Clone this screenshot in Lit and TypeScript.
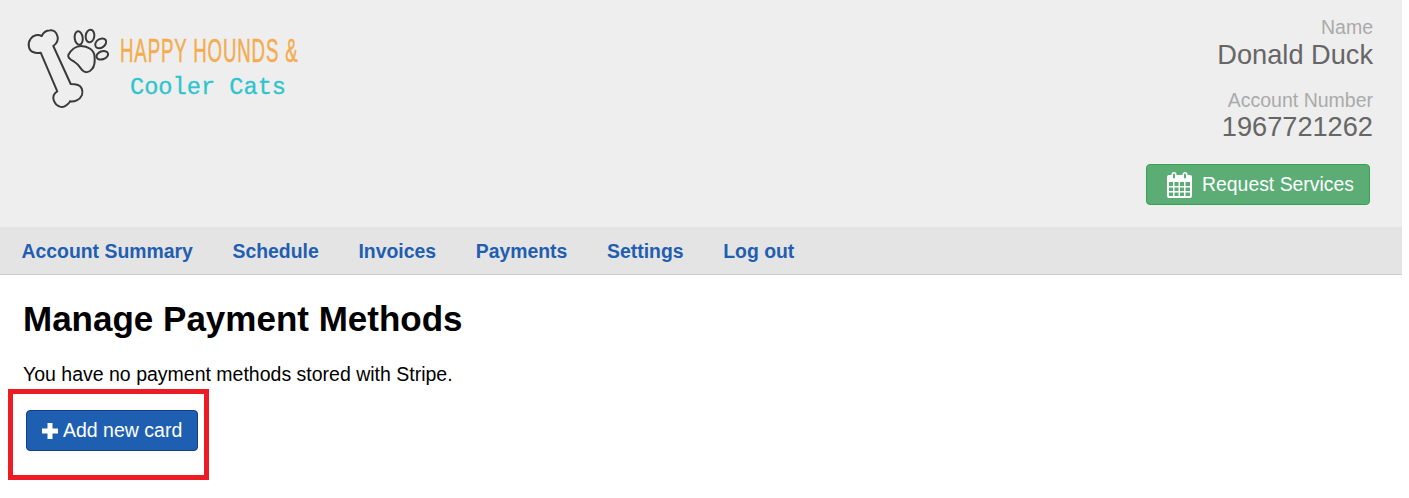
import { LitElement, html, css } from 'lit';
import { customElement } from 'lit/decorators.js';

@customElement('app-root')
export class AppRoot extends LitElement {
    static override styles = css`
    :host {
      display: block;
      position: relative;
      box-sizing: border-box;
      min-height: 498px;
      padding-right: 7px;
      background: #fff;
      color: #000;
      font-family: "Liberation Sans", Arial, sans-serif;
      font-size: 19.5px;
    }

    .top {
      height: 227px;
      box-sizing: border-box;
      background: #eee;
      display: flex;
      justify-content: space-between;
      padding: 14px 29px 0 24px;
    }
    .logo { display: block; width: 380px; height: 100px; }
    .logo-a { font-family: "Liberation Sans Narrow", "Liberation Sans", sans-serif; font-size: 33px; letter-spacing: 1.5px; fill: #f4ac4f; stroke: #f4ac4f; stroke-width: 0.5px; }
    .logo-b { font-family: "Liberation Mono", monospace; font-size: 24px; fill: #2cc5cd; stroke: #2cc5cd; stroke-width: 0.3px; }

    .account { display: flex; flex-direction: column; align-items: flex-end; }
    .label { color: #aaa; font-size: 19.5px; line-height: 26px; }
    .value { color: #666; font-size: 27.2px; line-height: 29px; }
    .value + .label { margin: 18px 0 -1px; }

    .request {
      display: flex; align-items: center; gap: 10px;
      box-sizing: border-box;
      height: 41px;
      margin: 23px 3px 0 0;
      padding: 0 15px 0 20px;
      font-size: 19.4px;
      color: #fff;
      background: #5bad75;
      border: 1px solid #36a350;
      border-radius: 4px;
    }

    nav {
      height: 48px;
      box-sizing: border-box;
      display: flex; align-items: center; gap: 39.7px;
      padding: 2px 21.5px 0;
      background: #e4e4e4;
      border-bottom: 1px solid #ccc;
      font-size: 19.4px;
      font-weight: 700;
      color: #1f5eb0;
    }

    main { padding: 0 24px; }
    h1 { margin: 0; padding-top: 23px; margin-left: -1px; font-size: 35px; line-height: 41px; font-weight: 700; }
    p { margin: 21px 0 0 -1px; line-height: 28px; }

    .add {
      display: flex; align-items: center; gap: 5px;
      box-sizing: border-box;
      width: 172px; height: 41px;
      margin: 22px 0 0 2px;
      padding-left: 15px;
      color: #fff;
      background: #1f5fb1;
      border: 1px solid #124080;
      border-radius: 4px;
    }

    .mark {
      position: absolute;
      left: 8px; top: 389px;
      width: 201px; height: 91px;
      box-sizing: border-box;
      border: 5px solid #ed1c24;
      pointer-events: none;
    }
  `;

    override render() {
        return html`
      <header class="top">
        <svg class="logo" viewBox="0 0 380 100" fill="none">
          <g stroke="#3a3a3a" stroke-width="2" stroke-linejoin="round">
            <path d="M17.700 22C14 20 9 21 6.500 25C3 30 5 37 9 38C12 39.500 15 39 16.700 38.700L33.300 77.300C30 79 28 83 30 87C32 92 38 95 42 91.500C44 90 46 88 46 87.300C50 88 56 86 58 81C59.500 76 57 72 54 71C51 70 48 70 46.700 70L29.300 32C32 30 34.500 27 33.700 23C33 18 29 15.500 26 16.300C22 16.500 19 19 17.700 22Z"/>
            <ellipse cx="54.700" cy="24" rx="4" ry="6.700" transform="rotate(-8 54.700 24)"/>
            <ellipse cx="66" cy="22" rx="4.300" ry="6.300" transform="rotate(8 66 22)"/>
            <ellipse cx="76.700" cy="29.300" rx="6" ry="4.300" transform="rotate(-35 76.700 29.300)"/>
            <ellipse cx="78.300" cy="41.300" rx="6" ry="4" transform="rotate(-20 78.300 41.300)"/>
            <path d="M44.300 41C47 36 52 32 57 32C64 32 70 36 70.500 42C71 47 71 52 68 55C65 59 61 59 58 56C55 52 54 50 50 47.500C47 46 43.500 44 44.300 41Z"/>
          </g>
          <text class="logo-a" transform="translate(96 48) scale(0.566 1)">HAPPY HOUNDS &amp;</text>
          <text class="logo-b" x="106" y="80" textLength="156" lengthAdjust="spacingAndGlyphs">Cooler Cats</text>
        </svg>
        <div class="account">
          <div class="label">Name</div>
          <div class="value">Donald Duck</div>
          <div class="label">Account Number</div>
          <div class="value">1967721262</div>
          <div class="request">
            <svg width="25" height="26" viewBox="0 0 25 26">
              <path fill="#fff" fill-rule="evenodd" d="M2 3h21a2 2 0 0 1 2 2v19a2 2 0 0 1-2 2H2a2 2 0 0 1-2-2V5a2 2 0 0 1 2-2zM2 10v4h4v-4zm5.500 0v4h4v-4zm5.500 0v4h4v-4zm5.500 0v4H23v-4zM2 15.500v3.500h4v-3.500zm5.500 0v3.500h4v-3.500zm5.500 0v3.500h4v-3.500zm5.500 0v3.500H23v-3.500zM2 20.500V24h4v-3.500zm5.500 0V24h4v-3.500zm5.500 0V24h4v-3.500zm5.500 0V24H23v-3.500z"/>
              <rect x="4.500" y="0" width="5" height="8" rx="2.500" fill="#fff"/>
              <rect x="6" y="1.500" width="2" height="5" rx="1" fill="#5bad75"/>
              <rect x="15.500" y="0" width="5" height="8" rx="2.500" fill="#fff"/>
              <rect x="17" y="1.500" width="2" height="5" rx="1" fill="#5bad75"/>
            </svg>
            <span>Request Services</span>
          </div>
        </div>
      </header>
      <nav>
        <span>Account Summary</span>
        <span>Schedule</span>
        <span>Invoices</span>
        <span>Payments</span>
        <span>Settings</span>
        <span>Log out</span>
      </nav>
      <main>
        <h1>Manage Payment Methods</h1>
        <p>You have no payment methods stored with Stripe.</p>
        <div class="add">
          <svg width="16" height="16" viewBox="0 0 16 16"><path fill="#fff" d="M5.500 0h5v5.500H16v5h-5.500V16h-5v-5.500H0v-5h5.500z"/></svg>
          <span>Add new card</span>
        </div>
      </main>
      <div class="mark"></div>
    `;
    }
}

declare global {
    interface HTMLElementTagNameMap { 'app-root': AppRoot; }
}
